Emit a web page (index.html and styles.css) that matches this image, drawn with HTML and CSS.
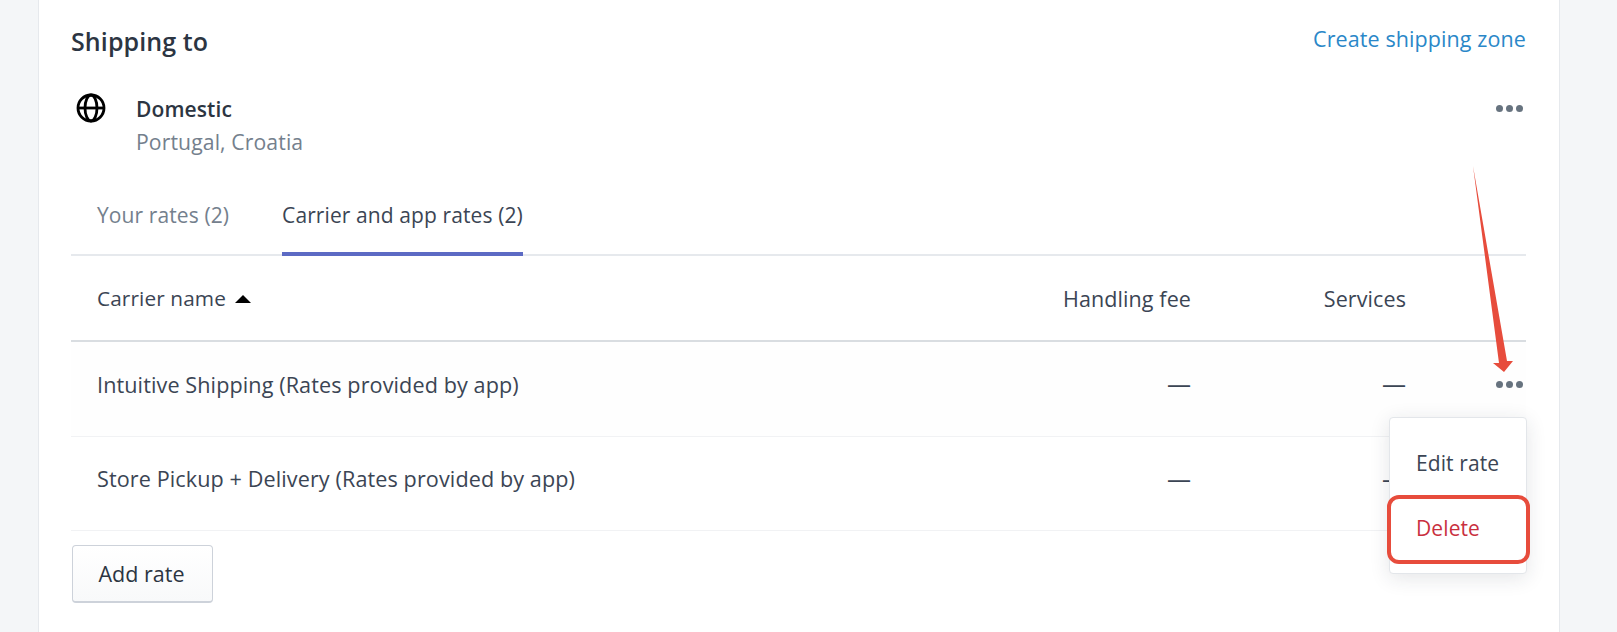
FILE: index.html
```html
<!DOCTYPE html>
<html lang="en">
<head>
    <meta charset="UTF-8">
    <meta name="viewport" content="width=device-width, initial-scale=1.0">
    <title>Shipping to</title>
    <link rel="stylesheet" href="styles.css">
</head>
<body>
    <div class="card">
        <div class="card-head">
            <h2>Shipping to</h2>
            <a class="link" href="#">Create shipping zone</a>
        </div>

        <div class="zone">
            <svg class="globe" viewBox="0 0 30 30" fill="none" stroke="#000" stroke-width="2.8">
                <circle cx="15" cy="15" r="13"/>
                <path d="M2 15h26"/>
                <ellipse cx="15" cy="15" rx="6" ry="13"/>
            </svg>
            <div class="zone-text">
                <div class="zone-name">Domestic</div>
                <div class="zone-countries">Portugal, Croatia</div>
            </div>
            <button class="dots"><span></span><span></span><span></span></button>
        </div>

        <div class="tabs">
            <div class="tab">Your rates (2)</div>
            <div class="tab active">Carrier and app rates (2)</div>
        </div>

        <div class="row head">
            <div class="name">Carrier name <span class="sort"></span></div>
            <div class="fee">Handling fee</div>
            <div class="services">Services</div>
            <div></div>
        </div>
        <div class="row first">
            <div class="name">Intuitive Shipping (Rates provided by app)</div>
            <div class="fee dash">—</div>
            <div class="services dash">—</div>
            <button class="dots"><span></span><span></span><span></span></button>
        </div>
        <div class="row">
            <div class="name">Store Pickup + Delivery (Rates provided by app)</div>
            <div class="fee dash">—</div>
            <div class="services dash">—</div>
            <div></div>
        </div>

        <button class="add-rate">Add rate</button>

        <div class="popover">
            <div class="popover-item">Edit rate</div>
            <div class="popover-item danger">Delete</div>
        </div>
    </div>

    <!-- red marks drawn on top of the screenshot -->
    <div class="mark-box"></div>
    <svg class="mark-arrow" viewBox="0 0 50 216">
        <path d="M0 0 L34 195 L40 195 L31 206 L20 197 L26 197 Z" fill="#e74c3c"/>
    </svg>
</body>
</html>
```

FILE: styles.css
```css
* {
    box-sizing: border-box;
}

html, body {
    height: 100%;
}

body {
    margin: 0;
    background: #f4f6f8;
    color: #3b4554;
    font-family: 'Open Sans', sans-serif;
    font-size: 21.6px;
    letter-spacing: 0.1px;
    overflow: hidden;
    position: relative;
}

.card {
    position: relative;
    margin: 0 57px 0 38px;
    height: 100%;
    padding: 0 33px 0 32px;
    background: #fff;
    border-left: 1px solid #e6e9ed;
    border-right: 1px solid #e6e9ed;
}

.card-head {
    display: flex;
    justify-content: space-between;
    height: 84px;
    padding-top: 24px;
}

h2 {
    margin: 1px 0 0;
    font-size: 25px;
    font-weight: 600;
    line-height: 32px;
    color: #2c3542;
}

.link {
    color: #2a87c8;
    font-size: 21.5px;
    line-height: 30px;
    text-decoration: none;
}

.zone {
    display: flex;
    height: 92px;
}

.globe {
    width: 30px;
    height: 30px;
    margin: 9px 0 0 5px;
}

.zone-text {
    flex: 1;
    margin-left: 30px;
    padding-top: 10px;
}

.zone-name {
    font-size: 21px;
    font-weight: 600;
    line-height: 30px;
    color: #2c3542;
}

.zone-countries {
    font-size: 21.2px;
    line-height: 36px;
    color: #74808d;
}

.dots {
    display: flex;
    gap: 3px;
    align-items: center;
    justify-content: flex-end;
    height: 8px;
    margin: 20px 3px 0 0;
    padding: 0;
    background: none;
    border: none;
}

.dots span {
    width: 7px;
    height: 7px;
    border-radius: 50%;
    background: #67737f;
}

.tabs {
    display: flex;
    gap: 53px;
    height: 80px;
    padding-left: 26px;
    border-bottom: 2px solid #e6e9ed;
}

.tab {
    height: 80px;
    padding-top: 24px;
    font-size: 21px;
    line-height: 30px;
    color: #74808d;
}

.tab.active {
    color: #3b4554;
    border-bottom: 4px solid #5c6ac4;
}

.row {
    display: grid;
    grid-template-columns: 1fr 200px 215px 120px;
    align-items: center;
    height: 94px;
    padding: 0 0 10px 26px;
    border-bottom: 1px solid #f1f2f4;
}

.row.head {
    height: 86px;
    border-bottom: 2px solid #d9dde1;
    padding: 0 0 0 26px;
}

.row.head .name {
    font-size: 20.8px;
}

.row.head .fee, .row.head .services {
    font-size: 21.5px;
}

.row.first {
    height: 95px;
    background: #fefefe;
}

.row .dots {
    margin: 0 3px 0 0;
}

.fee, .services {
    text-align: right;
}

.dash {
    font-size: 24px;
    line-height: 30px;
}

.sort {
    display: inline-block;
    margin-left: 4px;
    vertical-align: 3px;
    border-left: 8px solid transparent;
    border-right: 8px solid transparent;
    border-bottom: 8px solid #000;
}

.add-rate {
    display: block;
    width: 141px;
    height: 58px;
    margin: 14px 0 0 1px;
    padding: 0 2px 0 0;
    background: linear-gradient(#fff, #f8f9fa);
    border: 1px solid #cdd2da;
    border-bottom-width: 2px;
    border-radius: 4px;
    color: #2c3542;
    font-family: inherit;
    font-size: 21.5px;
}

.popover {
    position: absolute;
    top: 417px;
    right: 32px;
    width: 138px;
    height: 157px;
    padding-top: 15px;
    background: #fff;
    border: 1px solid #e3e6ea;
    border-radius: 4px;
    box-shadow: 0 4px 20px rgba(33, 43, 54, 0.12);
}

.popover-item {
    height: 65px;
    padding: 15px 0 0 26px;
    font-size: 21px;
    line-height: 30px;
}

.popover-item.danger {
    color: #c9303e;
}

.mark-box {
    position: absolute;
    top: 495px;
    left: 1387px;
    width: 143px;
    height: 69px;
    border: 4px solid #e74c3c;
    border-radius: 12px;
}

.mark-arrow {
    position: absolute;
    top: 166px;
    left: 1473px;
    width: 50px;
    height: 216px;
}
```
